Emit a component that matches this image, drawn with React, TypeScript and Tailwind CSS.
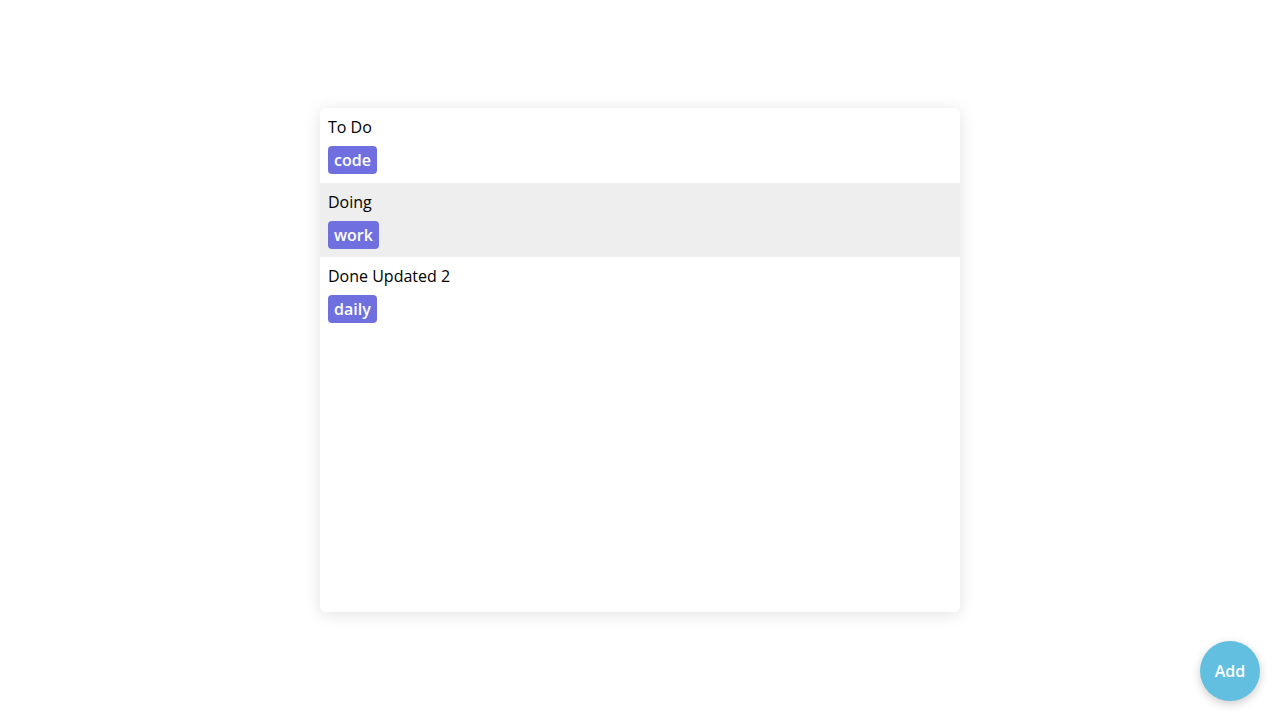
import React from "react";

const ITEMS = [
  { id: 1, title: "To Do", tag: "code" },
  { id: 2, title: "Doing", tag: "work" },
  { id: 3, title: "Done Updated 2", tag: "daily" },
];

export default function App() {
  return (
    <div
      className="relative h-[721px] w-full overflow-hidden bg-white text-black"
      style={{ fontFamily: '"Open Sans", "Noto Sans", sans-serif' }}
    >
      <div className="flex justify-center pt-[108px]">
        <div className="h-[504px] w-[640px] overflow-hidden rounded-md bg-white shadow-[0_2px_16px_rgba(0,0,0,0.12)]">
          {ITEMS.map((item, i) => (
            <div
              key={item.id}
              className={`flex flex-col items-start px-2 pt-[7px] pb-[8.5px] ${i === 1 ? "bg-[#eeeeee]" : ""}`}
            >
              <div className="text-base leading-6">{item.title}</div>
              <span className="mt-[7px] flex h-7 items-center rounded-[4px] bg-[#6f6fe0] px-1.5 text-base font-semibold text-white">
                {item.tag}
              </span>
            </div>
          ))}
        </div>
      </div>

      <button className="absolute bottom-5 right-5 flex h-[60px] w-[60px] items-center justify-center rounded-full bg-[#62bfe0] text-base font-semibold text-white shadow-[0_3px_10px_rgba(0,0,0,0.2)]">
        Add
      </button>
    </div>
  );
}
